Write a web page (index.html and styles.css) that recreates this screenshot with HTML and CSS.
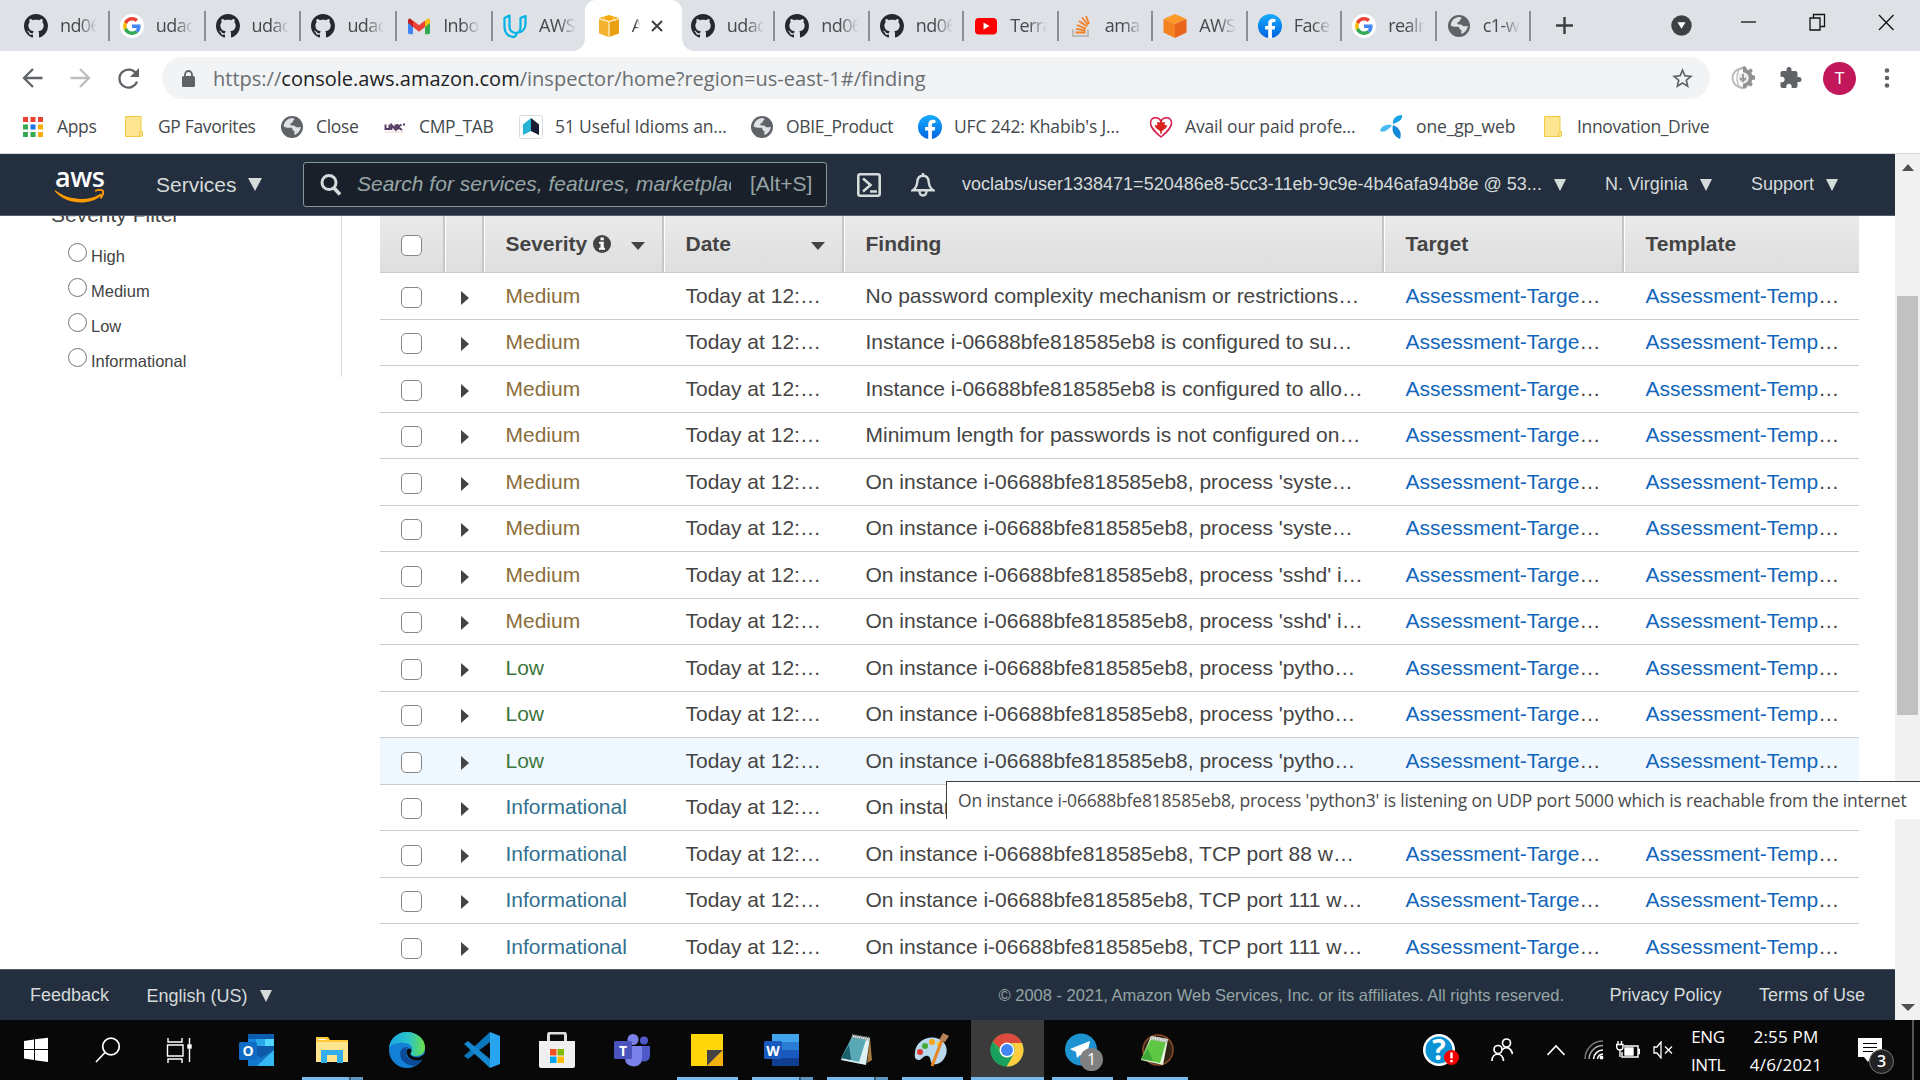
FILE: index.html
```html
<!DOCTYPE html>
<html lang="en">
<head>
<meta charset="utf-8">
<title>Amazon Inspector - Findings</title>
<link rel="stylesheet" href="styles.css">
</head>
<body>
<svg class="defs" width="0" height="0">
  <defs>
    <symbol id="github" viewBox="0 0 16 16"><path fill="#24292e" d="M8 0C3.58 0 0 3.58 0 8c0 3.54 2.29 6.53 5.47 7.59.4.07.55-.17.55-.38 0-.19-.01-.82-.01-1.49-2.01.37-2.53-.49-2.69-.94-.09-.23-.48-.94-.82-1.13-.28-.15-.68-.52-.01-.53.63-.01 1.08.58 1.23.82.72 1.21 1.87.87 2.33.66.07-.52.28-.87.51-1.07-1.78-.2-3.64-.89-3.64-3.95 0-.87.31-1.59.82-2.15-.08-.2-.36-1.02.08-2.12 0 0 .67-.21 2.2.82.64-.18 1.32-.27 2-.27s1.36.09 2 .27c1.53-1.04 2.2-.82 2.2-.82.44 1.1.16 1.92.08 2.12.51.56.82 1.27.82 2.15 0 3.07-1.87 3.75-3.65 3.95.29.25.54.73.54 1.48 0 1.07-.01 1.93-.01 2.2 0 .21.15.46.55.38A8.01 8.01 0 0 0 16 8c0-4.42-3.58-8-8-8z"/></symbol>
    <symbol id="google" viewBox="0 0 24 24"><circle cx="12" cy="12" r="12" fill="#fff"/><g transform="translate(3 3) scale(.375)"><path fill="#EA4335" d="M24 9.5c3.54 0 6.71 1.22 9.21 3.6l6.85-6.85C35.9 2.38 30.47 0 24 0 14.62 0 6.51 5.38 2.56 13.22l7.98 6.19C12.43 13.72 17.74 9.5 24 9.5z"/><path fill="#4285F4" d="M46.98 24.55c0-1.57-.15-3.09-.38-4.55H24v9.02h12.94c-.58 2.96-2.26 5.48-4.78 7.18l7.73 6c4.51-4.18 7.09-10.36 7.09-17.65z"/><path fill="#FBBC05" d="M10.53 28.59c-.48-1.45-.76-2.99-.76-4.59s.27-3.14.76-4.59l-7.98-6.19C.92 16.46 0 20.12 0 24c0 3.88.92 7.54 2.56 10.78l7.97-6.19z"/><path fill="#34A853" d="M24 48c6.48 0 11.93-2.13 15.89-5.81l-7.73-6c-2.15 1.45-4.92 2.3-8.16 2.3-6.26 0-11.57-4.22-13.47-9.91l-7.98 6.19C6.51 42.62 14.62 48 24 48z"/></g></symbol>
    <symbol id="facebook" viewBox="0 0 24 24"><linearGradient id="fbg" x1="0" y1="0" x2="0" y2="1"><stop offset="0" stop-color="#18acfe"/><stop offset="1" stop-color="#0163e0"/></linearGradient><circle cx="12" cy="12" r="12" fill="url(#fbg)"/><path fill="#fff" d="M16.7 15.4l.5-3.4h-3.3V9.8c0-1 .5-1.9 2-1.9h1.5V5s-1.4-.3-2.7-.3c-2.8 0-4.500 1.7-4.500 4.700V12H7.100v3.400h3.100v8.500h3.700v-8.500z"/></symbol>
    <symbol id="globe" viewBox="0 0 22 22"><circle cx="11" cy="11" r="11" fill="#5f6368"/><path fill="#dfe1e5" d="M11.500 2c2 .6 2.500 1.500 1 2.500-1 .8-.5 1.500-1.500 2.200-1 .6-1.500.3-1.700 1.600-.2 1 1.200 1.200 3.400 1.200 1.500 0 1.500 1.500 2.500 1.700 1 .3 3 .1 4.600-.4-.3 3.700-2.600 6.800-6 8.100-.5-1-1-1.700-.3-2.600.5-.7-.2-1.300-1-1.600-1.400-.5-.8-2.700-2.200-2.900-2.200-.3-4.300.3-7.600-1.400.2-4.500 4-8.300 8.800-8.400z"/></symbol>
    <symbol id="folder" viewBox="0 0 20 24"><path fill="#fee592" stroke="#f2ca45" stroke-width="1" d="M1.500 1.500h15.500v15h1.500v3.500q0 1.500-1.500 1.500h-15.500z"/><path fill="none" stroke="#f2ca45" d="M15.500 21.500v-3.500q0-1.500 1.500-1.500"/></symbol>
  </defs>
</svg>

<header class="tabstrip">
  <div class="tab left"><svg class="fav"><use href="#github"/></svg><span>nd06</span></div>
  <div class="tab left"><svg class="fav"><use href="#google"/></svg><span>udac</span></div>
  <div class="tab left"><svg class="fav"><use href="#github"/></svg><span>udac</span></div>
  <div class="tab left"><svg class="fav"><use href="#github"/></svg><span>udac</span></div>
  <div class="tab left"><svg class="fav" viewBox="0 0 24 24"><path fill="#4285f4" d="M1 6v12.500c0 1 .7 1.700 1.700 1.700H6V10z"/><path fill="#34a853" d="M23 6v12.500c0 1-.7 1.700-1.700 1.700H18V10z"/><path fill="#c5221f" d="M1 6.500V9l5 4V7L3.800 5C2.500 4 1 5 1 6.500z"/><path fill="#fbbc04" d="M23 6.500V9l-5 4V7l2.200-2C21.500 4 23 5 23 6.500z"/><path fill="#ea4335" d="M6 13V6.500l6 4.800 6-4.800V13l-6 4.700z"/></svg><span>Inbo</span></div>
  <div class="tab left last"><svg class="fav" viewBox="0 0 24 24" fill="none" stroke="#02b3e4" stroke-width="2.200" stroke-linejoin="round"><path d="M6.500 1.500 1.500 4v9c0 6 4 10 9.500 10 2-1 2.500-2 2.500-4-4 0-7-2-7-6.500z"/><path d="M13.500 19c5.500-.5 9-4 9-9V2l-5 2v9c0 3.500-1.500 5.500-4 6"/></svg><span>AWS</span></div>
  <div class="tab active"><svg class="fav small" viewBox="0 0 22 24"><path fill="#f7a80d" d="M1 4 11 1l10 3-10 3z"/><path fill="#f4b132" d="M1 5 10.500 8v15L1 19.500z"/><path fill="#e99f12" d="M21 5 11.500 8v15l9.500-3.500z"/><path stroke="#ffd98a" d="M11 7v16M6 3v3l-2 1M16 3v3l2 1" fill="none"/></svg><span>A</span><svg class="x" viewBox="0 0 12 12"><path d="M1 1l10 10M11 1 1 11" stroke="#3c4043" stroke-width="2"/></svg></div>
  <div class="tab"><svg class="fav"><use href="#github"/></svg><span>udac</span></div>
  <div class="tab"><svg class="fav"><use href="#github"/></svg><span>nd06</span></div>
  <div class="tab"><svg class="fav"><use href="#github"/></svg><span>nd06</span></div>
  <div class="tab"><svg class="fav" viewBox="0 0 24 24"><rect x="1" y="4" width="22" height="16.500" rx="4" fill="#f00"/><path fill="#fff" d="M9.500 8.500v7l6-3.500z"/></svg><span>Terra</span></div>
  <div class="tab"><svg class="fav" viewBox="0 0 24 24" fill="none"><path d="M4 15.500V22h15v-6.500" stroke="#bcbbbb" stroke-width="2"/><path d="M6.500 18.500h10M6.800 14.800l9.700 1.700M7.800 11l9 3.600M10 7l8 5.600M13 3.500l6 7.500M17 2l3 8" stroke="#f48024" stroke-width="1.800"/></svg><span>ama</span></div>
  <div class="tab"><svg class="fav" viewBox="0 0 24 24"><path fill="#fc9827" d="m12 0 11.500 5L12 10 .5 5z"/><path fill="#f58220" d="M.5 5 12 10v14L.5 18.500z"/><path fill="#e8641b" d="M23.500 5 12 10v14l11.500-5.500z"/></svg><span>AWS</span></div>
  <div class="tab"><svg class="fav"><use href="#facebook"/></svg><span>Face</span></div>
  <div class="tab"><svg class="fav"><use href="#google"/></svg><span>realr</span></div>
  <div class="tab"><svg class="fav"><use href="#globe" x="1" y="1" width="22" height="22"/></svg><span>c1-w</span></div>
  <svg class="plus" viewBox="0 0 18 18"><path d="M9 0v18M0 9h18" stroke="#3c4043" stroke-width="2.600"/></svg>
  <svg class="drop" viewBox="0 0 22 22"><circle cx="11" cy="11" r="10.700" fill="#3c4043"/><path fill="#fff" d="M6.800 7.500h8.400L11 14.500z"/></svg>
  <svg class="winbtns" viewBox="0 0 154 18" fill="none" stroke="#111" stroke-width="1.300"><path d="M0 9h15"/><path d="M69 5h10v12H69zM72.500 5V1.500H83.500V13.500H79.500"/><path d="m138 2 14.500 15M152.500 2 138 17"/></svg>
</header>

<nav class="toolbar">
  <svg class="arrows" viewBox="0 0 118 24" fill="none" stroke-width="2.300"><path stroke="#5f6368" d="M20.500 12H2M11 3l-9 9 9 9"/><path stroke="#bcbec0" d="M48.500 12H67M58 3l9 9-9 9"/><path stroke="#5f6368" d="M114.500 8.500A9 9 0 1 0 115 15.500"/><path fill="#5f6368" d="M117 2v9h-9z"/></svg>
  <div class="omnibox">
    <svg class="lock" viewBox="0 0 13 17"><rect y="6" width="13" height="11" rx="1.500" fill="#5f6368"/><path d="M3 7V4.500a3.500 3.500 0 0 1 7 0V7" fill="none" stroke="#5f6368" stroke-width="1.800"/></svg>
    <span class="url">https://<b>console.aws.amazon.com</b>/inspector/home?region=us-east-1#/finding</span>
    <svg class="star" viewBox="0 0 24 24"><path fill="#5f6368" d="m22 9.240-7.190-.62L12 2 9.190 8.630 2 9.240l5.460 4.730L5.820 21 12 17.270 18.180 21l-1.630-7.030L22 9.240zM12 15.400l-3.760 2.270 1-4.280-3.320-2.880 4.380-.38L12 6.100l1.710 4.040 4.380.38-3.320 2.880 1 4.280L12 15.400z"/></svg>
  </div>
  <svg class="ext" viewBox="0 0 24 24"><circle cx="11" cy="12" r="9.500" fill="none" stroke="#bbb" stroke-width="2"/><path d="M12 1C4 3 4 21 12 23" fill="none" stroke="#bbb" stroke-width="1.500"/><path fill="#909090" d="M12 .5h3l.5 3 2 .8 2.300-2 2 2.400-1.600 2.300.8 2 3 .5v4l-3 .5-.8 2 1.600 2.300-2 2.400-2.300-2-2 .8-.5 3h-3z"/><circle cx="12" cy="12" r="5.800" fill="#eee"/><path d="M12 8v7M9 12l3 3 3-3" fill="none" stroke="#999" stroke-width="2"/></svg>
  <svg class="puzzle" viewBox="2 1 21 22"><path fill="#5f6368" d="M20.500 11H19V7c0-1.100-.9-2-2-2h-4V3.500a2.500 2.500 0 0 0-5 0V5H4c-1.100 0-1.990.9-1.990 2v3.800H3.500c1.490 0 2.700 1.210 2.700 2.700s-1.210 2.700-2.700 2.700H2V20c0 1.100.9 2 2 2h3.800v-1.500c0-1.490 1.210-2.700 2.700-2.700s2.700 1.210 2.700 2.700V22H17c1.100 0 2-.9 2-2v-4h1.500a2.500 2.500 0 0 0 0-5z"/></svg>
  <div class="avatar">T</div>
  <svg class="dots" viewBox="0 0 6 20" fill="#5f6368"><circle cx="3" cy="2.500" r="2.300"/><circle cx="3" cy="10" r="2.300"/><circle cx="3" cy="17.500" r="2.300"/></svg>
</nav>

<nav class="bookmarks">
  <a><svg viewBox="0 0 24 24"><g fill="#ea4335"><path d="M2 2h5v5H2zM9.500 2h5v5h-5zM17 2h5v5h-5z"/></g><path fill="#34a853" d="M2 9.500h5v5H2zM2 17h5v5H2zM9.500 17h5v5h-5z"/><path fill="#1a73e8" d="M9.500 9.500h5v5h-5z"/><path fill="#fbab05" d="M17 9.500h5v5h-5zM17 17h5v5h-5z"/></svg><span>Apps</span></a>
  <a><svg><use href="#folder"/></svg><span>GP Favorites</span></a>
  <a><svg><use href="#globe" x="1" y="1" width="22" height="22"/></svg><span>Close</span></a>
  <a><svg viewBox="0 0 24 24"><path d="M2.500 9.500v4.500h4V9.500M8.500 15v-5l4 4.500V9.500M14.500 9v6M18.500 9.500l-3.500 2.500 4 3M20 9.500h2" fill="none" stroke="#553a63" stroke-width="1.900"/><path d="M2 17h18" stroke="#e6d2cc"/></svg><span>CMP_TAB</span></a>
  <a class="wide"><svg viewBox="0 0 24 24"><rect x=".5" y=".5" width="23" height="23" rx="2" fill="#fff" stroke="#dadce0"/><path fill="#27b3d3" d="M4 9.500 12 3v13l-8 4z"/><path fill="#171b33" d="M12 3l8 6.500V20l-8-4z"/></svg><span>51 Useful Idioms an...</span></a>
  <a><svg><use href="#globe" x="1" y="1" width="22" height="22"/></svg><span>OBIE_Product</span></a>
  <a class="wide"><svg><use href="#facebook"/></svg><span>UFC 242: Khabib's J...</span></a>
  <a class="wide"><svg viewBox="0 0 24 24"><path d="M12 22C5 16 1 12 1.500 7.500 2 2 9 1 12 6c3-5 10-4 10.500 1.500C23 12 19 16 12 22z" fill="none" stroke="#d81c4c" stroke-width="1.500"/><path fill="#d8231f" d="m12 5 1.500 2.500L16 7l-.5 3 3 .5-1.500 2.500-4 3-.5 3h-1l-.5-3-4-3L5.500 10.500l3-.5L8 7l2.500.5z"/></svg><span>Avail our paid profe...</span></a>
  <a class="wide"><svg viewBox="0 0 24 24" fill="#19a3e6"><path d="M13 9c-1-5 3-9 9-9 1 5-4 7-9 9z"/><path d="M12 10C6 9 1 11 0 16c5 2 9-2 12-6z" fill="#45b9f0"/><path d="M13 10c7 3 9 8 7 14-5-2-9-7-7-14z" fill="#1389d8"/></svg><span>one_gp_web</span></a>
  <a><svg><use href="#folder"/></svg><span>Innovation_Drive</span></a>
</nav>

<main class="viewport">
  <div class="page">
    <header class="awsnav">
      <div class="logo"><span>aws</span><svg viewBox="0 0 49 14"><path fill="#f90" d="M0 1C12 11 33 13 45 5c1.500-1 2.500.500 1.200 1.700C34 17 11 15.500 0 2.500z"/><path d="M40 2c3-1.500 7-1.500 8 0 .5 2-.5 5-2.500 7.500" fill="none" stroke="#f90" stroke-width="1.900"/></svg></div>
      <div class="services">Services <i class="tri big"></i></div>
      <div class="search">
        <svg viewBox="0 0 22 22" fill="none" stroke="#d5dbdb"><circle cx="9" cy="8.500" r="7" stroke-width="3"/><path d="m14 14 6 6.500" stroke-width="3.600"/></svg>
        <em>Search for services, features, marketplac</em><span>[Alt+S]</span>
      </div>
      <svg class="navicon shell" viewBox="0 0 24 24" fill="none" stroke="#d5dbdb" stroke-width="2.600"><rect x="1.300" y="1.300" width="21.400" height="21.400" rx="2"/><path d="m6 5.500 7.500 6.500L6 18.500M13 18.500h7"/></svg>
      <svg class="navicon bell" viewBox="0 0 24 24" fill="none" stroke="#d5dbdb" stroke-width="2.400"><path d="M12 0v2.500M12 2.800C8 2.800 6.500 6 6.300 9 6 12.500 5 15 1.800 17.300h20.400C19 15 18 12.500 17.700 9 17.500 6 16 2.800 12 2.800zM8.500 18c0 6 7 6 7 0"/></svg>
      <div class="acct">voclabs/user1338471=520486e8-5cc3-11eb-9c9e-4b46afa94b8e @ 53...<i class="tri"></i></div>
      <div class="region">N. Virginia<i class="tri"></i></div>
      <div class="support">Support<i class="tri"></i></div>
    </header>
    <div class="content">
      <aside class="filter">
        <h3>Severity Filter</h3>
        <label><i></i>High</label><label><i></i>Medium</label><label><i></i>Low</label><label><i></i>Informational</label>
      </aside>
      <section class="table">
        <div class="row head"><div><i class="cb"></i></div><div></div><div>Severity<svg class="info" viewBox="0 0 18 18"><circle cx="9" cy="9" r="9" fill="#444"/><path fill="#fff" d="M7.500 2.500h3.300v2.700H7.500zM6 6.700h4.800v6H12v2H6v-2h1.500v-4H6z"/></svg><i class="sort"></i></div><div>Date<i class="sort"></i></div><div>Finding</div><div>Target</div><div>Template</div></div>
        <div class="row"><div><i class="cb"></i></div><div><i class="exp"></i></div><div class="med">Medium</div><div>Today at 12:…</div><div>No password complexity mechanism or restrictions…</div><div><a>Assessment-Targe</a>…</div><div><a>Assessment-Temp</a>…</div></div>
        <div class="row"><div><i class="cb"></i></div><div><i class="exp"></i></div><div class="med">Medium</div><div>Today at 12:…</div><div>Instance i-06688bfe818585eb8 is configured to su…</div><div><a>Assessment-Targe</a>…</div><div><a>Assessment-Temp</a>…</div></div>
        <div class="row"><div><i class="cb"></i></div><div><i class="exp"></i></div><div class="med">Medium</div><div>Today at 12:…</div><div>Instance i-06688bfe818585eb8 is configured to allo…</div><div><a>Assessment-Targe</a>…</div><div><a>Assessment-Temp</a>…</div></div>
        <div class="row"><div><i class="cb"></i></div><div><i class="exp"></i></div><div class="med">Medium</div><div>Today at 12:…</div><div>Minimum length for passwords is not configured on…</div><div><a>Assessment-Targe</a>…</div><div><a>Assessment-Temp</a>…</div></div>
        <div class="row"><div><i class="cb"></i></div><div><i class="exp"></i></div><div class="med">Medium</div><div>Today at 12:…</div><div>On instance i-06688bfe818585eb8, process 'syste…</div><div><a>Assessment-Targe</a>…</div><div><a>Assessment-Temp</a>…</div></div>
        <div class="row"><div><i class="cb"></i></div><div><i class="exp"></i></div><div class="med">Medium</div><div>Today at 12:…</div><div>On instance i-06688bfe818585eb8, process 'syste…</div><div><a>Assessment-Targe</a>…</div><div><a>Assessment-Temp</a>…</div></div>
        <div class="row"><div><i class="cb"></i></div><div><i class="exp"></i></div><div class="med">Medium</div><div>Today at 12:…</div><div>On instance i-06688bfe818585eb8, process 'sshd' i…</div><div><a>Assessment-Targe</a>…</div><div><a>Assessment-Temp</a>…</div></div>
        <div class="row"><div><i class="cb"></i></div><div><i class="exp"></i></div><div class="med">Medium</div><div>Today at 12:…</div><div>On instance i-06688bfe818585eb8, process 'sshd' i…</div><div><a>Assessment-Targe</a>…</div><div><a>Assessment-Temp</a>…</div></div>
        <div class="row"><div><i class="cb"></i></div><div><i class="exp"></i></div><div class="low">Low</div><div>Today at 12:…</div><div>On instance i-06688bfe818585eb8, process 'pytho…</div><div><a>Assessment-Targe</a>…</div><div><a>Assessment-Temp</a>…</div></div>
        <div class="row"><div><i class="cb"></i></div><div><i class="exp"></i></div><div class="low">Low</div><div>Today at 12:…</div><div>On instance i-06688bfe818585eb8, process 'pytho…</div><div><a>Assessment-Targe</a>…</div><div><a>Assessment-Temp</a>…</div></div>
        <div class="row hover"><div><i class="cb"></i></div><div><i class="exp"></i></div><div class="low">Low</div><div>Today at 12:…</div><div>On instance i-06688bfe818585eb8, process 'pytho…</div><div><a>Assessment-Targe</a>…</div><div><a>Assessment-Temp</a>…</div></div>
        <div class="row"><div><i class="cb"></i></div><div><i class="exp"></i></div><div class="inf">Informational</div><div>Today at 12:…</div><div>On instan</div><div></div><div></div></div>
        <div class="row"><div><i class="cb"></i></div><div><i class="exp"></i></div><div class="inf">Informational</div><div>Today at 12:…</div><div>On instance i-06688bfe818585eb8, TCP port 88 w…</div><div><a>Assessment-Targe</a>…</div><div><a>Assessment-Temp</a>…</div></div>
        <div class="row"><div><i class="cb"></i></div><div><i class="exp"></i></div><div class="inf">Informational</div><div>Today at 12:…</div><div>On instance i-06688bfe818585eb8, TCP port 111 w…</div><div><a>Assessment-Targe</a>…</div><div><a>Assessment-Temp</a>…</div></div>
        <div class="row"><div><i class="cb"></i></div><div><i class="exp"></i></div><div class="inf">Informational</div><div>Today at 12:…</div><div>On instance i-06688bfe818585eb8, TCP port 111 w…</div><div><a>Assessment-Targe</a>…</div><div><a>Assessment-Temp</a>…</div></div>
      </section>
    </div>
    <footer class="awsfoot">
      <span class="feedback">Feedback</span><span class="lang">English (US)<i class="tri"></i></span>
      <span class="copy">© 2008 - 2021, Amazon Web Services, Inc. or its affiliates. All rights reserved.</span>
      <span class="privacy">Privacy Policy</span><span>Terms of Use</span>
    </footer>
  </div>
  <div class="scrollbar"><i class="up"></i><i class="thumb"></i><i class="down"></i></div>
</main>

<div class="tooltip">On instance i-06688bfe818585eb8, process 'python3' is listening on UDP port 5000 which is reachable from the internet</div>

<footer class="taskbar">
  <div class="apps">
    <div class="app sys"><svg viewBox="0 0 36 36" fill="#fff"><path d="M6 9l10-1.500V17H6zM17 7.300 30 5.800V17H17zM6 18h10v10L6 26.500zM17 18h13v12l-13-1.800z"/></svg></div>
    <div class="app sys"><svg viewBox="0 0 36 36" fill="none" stroke="#fff" stroke-width="1.700"><circle cx="21" cy="14.500" r="8.300"/><path d="M15 20.500 6 30"/></svg></div>
    <div class="app sys"><svg viewBox="0 0 36 36" fill="none" stroke="#fff" stroke-width="1.400"><path d="M7 6v4h14V6M6.500 13h15.500v11H6.500zM7 31v-4h14v4M28.500 6v6M28.500 17v13"/><path d="M27 13h3v3h-3z" fill="#fff"/></svg></div>
    <div class="app"><svg viewBox="0 0 36 36"><path fill="#0a5cb0" d="M9 2h26v16H9z"/><path fill="#1a84d8" d="M9 7h8v11H9z"/><path fill="#28a8ea" d="M17 7h9v11h-9z"/><path fill="#50d9ff" d="M26 7h9v8h-9z"/><path fill="#1377cb" d="M9 16h26v18H9z"/><path fill="#35b8f1" d="M35 18v16H18z"/><path fill="#0f5aa8" d="m9 18 13 8 13-8v-4H9z"/><rect y="10" width="18" height="18" rx="1.500" fill="#0f6cc4"/><text x="9" y="24" text-anchor="middle">O</text></svg></div>
    <div class="app run multi"><svg viewBox="0 0 36 36"><path fill="#ffc93c" d="M2 5h12l2 3h18v4H2z"/><path fill="#ffe490" d="M2 10h32v20H2z"/><path fill="#fff" d="M4 7h8v1H4z"/><path fill="#34aeea" d="M7 18h22v13h-6v-8H13v8H7z"/></svg></div>
    <div class="app"><svg viewBox="0 0 36 36"><defs><linearGradient id="eg" x1="0" x2="1"><stop offset="0" stop-color="#1ba5e0"/><stop offset=".55" stop-color="#2bc3c9"/><stop offset="1" stop-color="#6be044"/></linearGradient></defs><circle cx="18" cy="18" r="18" fill="#1380d6"/><path fill="url(#eg)" d="M0 16C1 6 9 0 18 0c10 0 18 7 18 15 0 6-4 9-9 9-4 0-6-2-5-4 3-5-1-9-7-9C8 10 2 13 0 16z"/><path fill="#0c4a98" d="M12 18c-3 8 3 15 13 16 4-1 7-4 8-7-8 3-16 1-16-7 0-2 .5-4 2-5-3 0-6 1-7 3z"/><path fill="#080808" d="M17.500 19c0-2 3-4 5-1 .5 2-3 4 .5 6 5 2.500 10 1 13-3v4.500l-2.500 2C25 30 17.500 27 17.500 19z"/></svg></div>
    <div class="app"><svg viewBox="0 0 36 36"><path fill="#0b78bd" d="M26 0v10L4 27 0 24z"/><path fill="#1588d0" d="M0 12l4-3 22 18v9z"/><path fill="#28a5ee" d="m26 0 10 4v28l-10 4z"/></svg></div>
    <div class="app"><svg viewBox="0 0 36 36"><path d="M9.500 12V3q0-2 2-2h13q2 0 2 2v9" fill="none" stroke="#ddd" stroke-width="3"/><path fill="#f0f0f0" d="M0 9h36v25q0 2-2 2H2q-2 0-2-2z"/><path fill="#f25022" d="M11 17h6.500v6.500H11z"/><path fill="#7fba00" d="M18.500 17H25v6.500h-6.500z"/><path fill="#00a4ef" d="M11 24.500h6.500V31H11z"/><path fill="#ffb900" d="M18.500 24.500H25V31h-6.500z"/></svg></div>
    <div class="app"><svg viewBox="0 0 36 36"><circle cx="19" cy="7.500" r="5.500" fill="#7b83eb"/><circle cx="30" cy="8.500" r="4" fill="#5059c9"/><path fill="#5059c9" d="M25 14h11v9q0 6-6 6.500-5 0-5-6z"/><path fill="#7b83eb" d="M11 14h17v12q0 8-8 8.500-9-.5-9-8.500z"/><rect y="9" width="18" height="18" rx="1.500" fill="#4b53bc"/><text x="9" y="23.500" text-anchor="middle">T</text></svg></div>
    <div class="app run"><svg viewBox="0 0 36 36"><path fill="#ffd60a" d="M2 2h32v16L20 34H2z"/><path fill="#444" d="M18 18h16L18 34z"/><path fill="#f2b10c" d="M34 18v16H18z"/></svg></div>
    <div class="app run multi"><svg viewBox="0 0 36 36"><path fill="#41a5ee" d="M8 2h27v8H8z"/><path fill="#2b7cd3" d="M8 10h27v8H8z"/><path fill="#185abd" d="M8 18h27v8H8z"/><path fill="#103f91" d="M8 26h27v8H8z"/><rect y="9" width="18" height="18" rx="1.500" fill="#185abd"/><text x="9" y="23.500" text-anchor="middle">W</text></svg></div>
    <div class="app run multi"><svg viewBox="0 0 36 36"><path fill="#a57b3e" d="m31 6 2 22-5 3z"/><path fill="#dff1f3" d="m14 3 17 3-4 27L2 28z"/><path fill="#58a9b5" d="m13 5 14 2.500-7 22.500L2 26z"/><path fill="#1c5f6d" d="M10 13 2 26l10 2z"/><path d="M13 4l18 3" stroke="#999" stroke-width="4" stroke-dasharray="1 1"/></svg></div>
    <div class="app run"><svg viewBox="0 0 36 36"><path fill="#b8d9ee" d="M1 20C2 10 12 4 22 6c10 2 13 12 9 19-3 6-8 8-12 7-4-2-1-6-5-8-5-2-7 7-12 3-2-2-1-5-1-7z"/><circle cx="6" cy="20" r="3" fill="#e23c31"/><circle cx="11" cy="14" r="3" fill="#46ac37"/><circle cx="18" cy="10" r="3" fill="#f7a51b"/><circle cx="25" cy="12" r="2.500" fill="#fbc837"/><path stroke="#e98523" stroke-width="3" d="M28 8 18 34"/><path fill="#b68458" d="m25 8 4-7 6 3-4 6z"/></svg></div>
    <div class="app run current"><svg viewBox="0 0 36 36"><circle cx="18" cy="18" r="16.500" fill="#34a853"/><path fill="#dd4b3e" d="M3.700 9.700A16.500 16.500 0 0 1 33 11H18a7.500 7.500 0 0 0-7 5z"/><path fill="#ffcd40" d="M33 11a16.500 16.500 0 0 1-15.500 23.500L24.500 22A8 8 0 0 0 22 11z"/><path fill="#18a05d" d="M3.700 9.700A16.500 16.500 0 0 0 17.500 34.500L24 23q-3 3-7 3-5-1-6.500-5z"/><circle cx="18" cy="18" r="7.500" fill="#fff"/><circle cx="18" cy="18" r="6" fill="#4285f4"/></svg></div>
    <div class="app run"><svg viewBox="0 0 36 36"><circle cx="17" cy="17.500" r="16" fill="#1d93d2"/><path fill="#fff" d="M6 17 26 9l-4 18-6-4-3 3-1-6z"/></svg><b class="badge">1</b></div>
    <div class="app run"><svg viewBox="0 0 36 36"><circle cx="19" cy="18" r="15" fill="#302214" stroke="#8c4c2c" stroke-width="1.500"/><path fill="#e8f5df" d="m12 4 17 3-5 26L2 28z"/><path fill="#5fc744" d="m12 7 15 3-6 21L2 27z"/><path fill="#3fa637" d="M9 17 2 27l12 2z"/><path d="M12 6l17 3" stroke="#bbb" stroke-width="4" stroke-dasharray="1.500 1"/></svg></div>
  </div>
  <div class="tray">
    <svg class="help" viewBox="0 0 37 34"><circle cx="16" cy="16" r="16" fill="#fff"/><circle cx="16" cy="16" r="13.500" fill="#0a94d6"/><text x="16" y="26" text-anchor="middle" class="q">?</text><circle cx="28.500" cy="23.500" r="7.500" fill="#f40000"/><path d="M28.500 18.500v6M28.500 26v2.200" stroke="#fff" stroke-width="2.400"/></svg>
    <svg class="people" viewBox="0 0 22 24" fill="none" stroke="#fff" stroke-width="1.700"><circle cx="7" cy="11.500" r="4"/><circle cx="15.500" cy="5" r="4"/><path d="M1 23c0-9 11-9 11.500 0M11 12c3-4 9-3 10.500 4"/></svg>
    <svg class="chev" viewBox="0 0 18 12" fill="none" stroke="#fff" stroke-width="1.600"><path d="m.5 11 8.500-9 8.500 9"/></svg>
    <svg class="wifi" viewBox="0 0 20 20" fill="none" stroke="#fff" stroke-width="1.500"><path stroke="#777" d="M1 19A18 18 0 0 1 19 1"/><path stroke="#aaa" d="M5 19A14 14 0 0 1 19 5.500"/><path d="M9.500 19A9.500 9.500 0 0 1 19 10M13.500 19a6 6 0 0 1 5.500-5"/><circle cx="17.500" cy="17.500" r="1.200" fill="#fff"/></svg>
    <svg class="bat" viewBox="0 0 24 18" fill="none" stroke="#fff" stroke-width="1.400"><path d="M8 5h14v11H6v-5M22 8.500h1.500v4H22M2 0v4M5.500 0v4M.7 3.500H7V6c0 4-6 4-6.300 0zM4 9v7"/><path fill="#fff" d="M9 7h8v7H9z"/></svg>
    <svg class="vol" viewBox="0 0 20 18" fill="none" stroke="#fff" stroke-width="1.300"><path d="M1 6h3l4-5v16l-4-5H1zM12 5.500l7 7M19 5.500l-7 7"/></svg>
    <div class="two lang2">ENG<br>INTL</div>
    <div class="two clock">2:55 PM<br>4/6/2021</div>
    <div class="notif"><svg viewBox="0 0 24 24"><path fill="#fff" d="M0 0h24v19H13l-3 5-4-5H0z"/><path d="M5 5.500h14M5 9.500h14M5 13.500h10" stroke="#000" stroke-width="1.200"/></svg><b class="count">3</b></div>
    <i class="peek"></i>
  </div>
</footer>
</body>
</html>
```
FILE: styles.css
```css
* { box-sizing: border-box; }
body { margin: 0; width: 1920px; height: 1080px; overflow: hidden; position: relative; background: #fff; font-family: "Liberation Sans", Arial, sans-serif; color: #444; }
svg { display: block; flex: none; }
i { font-style: normal; flex: none; }
.defs { position: absolute; }

/* browser tabs */
.tabstrip { height: 51px; background: #dee1e6; display: flex; align-items: center; padding-left: 14px; font: 18px "Open Sans", "Noto Sans", sans-serif; color: #45494d; }
.tab { width: 94.5px; height: 30px; border-right: 2px solid #8b8e93; display: flex; align-items: center; padding-left: 10px; flex: none; }
.tab.left { width: 95.8px; }
.tab.last { border-color: transparent; }
.tab span { width: 38px; margin-left: 12px; padding-bottom: 2px; overflow: hidden; white-space: nowrap; letter-spacing: -.6px; -webkit-mask-image: linear-gradient(90deg, #000 50%, transparent 98%); mask-image: linear-gradient(90deg, #000 50%, transparent 98%); }
.fav { width: 24px; height: 24px; }
.tab.active { width: 97px; height: 51px; margin: 0 -1px 0 -4px; background: #fff; border: 0; border-radius: 11px 11px 0 0; padding-left: 13px; position: relative; }
.tab.active::before, .tab.active::after { content: ""; position: absolute; bottom: 0; width: 12px; height: 12px; }
.tab.active::before { left: -12px; background: radial-gradient(circle at 0 0, transparent 11.500px, #fff 12px); }
.tab.active::after { right: -12px; background: radial-gradient(circle at 100% 0, transparent 11.500px, #fff 12px); }
.tab.active span { width: 8px; margin-left: 12px; }
.fav.small { width: 22px; }
.x { width: 12px; height: 12px; margin-left: 11px; }
.plus { width: 17px; height: 17px; margin-left: 25px; }
.drop { width: 21px; height: 21px; margin-left: 98px; }
.winbtns { width: 154px; height: 18px; margin: -8px 0 0 49px; }

/* address bar */
.toolbar { height: 54px; display: flex; align-items: center; padding-left: 22px; }
.arrows { width: 118px; height: 24px; }
.omnibox { margin-left: 22px; width: 1548px; height: 42px; border-radius: 21px; background: #f1f3f4; display: flex; align-items: center; padding: 0 15px 0 20px; }
.lock { width: 13px; height: 17px; }
.url { flex: 1; margin-left: 18px; font: 20px "Open Sans", "Noto Sans", sans-serif; color: #6a6e72; white-space: nowrap; letter-spacing: .01px; }
.url b { font-weight: 400; color: #202124; }
.star { width: 25px; height: 25px; }
.ext { width: 24px; height: 24px; margin-left: 21px; }
.puzzle { width: 22px; height: 22px; margin-left: 25px; }
.avatar { width: 33px; height: 33px; margin-left: 21px; border-radius: 50%; background: #c2185b; color: #fff; font: 17px/33px Roboto, sans-serif; text-align: center; }
.dots { width: 6px; height: 20px; margin-left: 28px; }
.bookmarks { height: 49px; padding: 0 0 5px 21px; border-bottom: 1px solid #d4d6d9; display: grid; grid-template-columns: 101px 158px 103px 136px 231px 168px 231px 231px 161px 1fr; align-items: center; font: 17.500px "Open Sans", "Noto Sans", sans-serif; color: #45494d; }
.bookmarks a { display: flex; align-items: center; gap: 12px; white-space: nowrap; letter-spacing: -.35px; }
.bookmarks a.wide { letter-spacing: -.15px; }
.bookmarks svg { width: 24px; height: 24px; }
.bookmarks span { padding-bottom: 2px; }

/* page area */
.viewport { height: 866px; display: flex; }
.page { width: 1895px; height: 866px; display: flex; flex-direction: column; }
.awsnav { height: 62px; flex: none; background: #232f3e; border-bottom: 1px solid #545b64; display: flex; align-items: center; color: #d5dbdb; font-size: 18px; white-space: nowrap; padding-left: 55px; }
.logo { width: 49px; color: #fff; font: 600 27px/24px "Open Sans", sans-serif; letter-spacing: -.5px; }
.logo span { display: block; height: 22px; line-height: 19px; text-align: center; }
.logo svg { width: 49px; height: 14px; }
.services { margin-left: 52px; width: 147px; font-size: 21px; display: flex; align-items: center; }
.tri { width: 0; height: 0; border: 6.500px solid transparent; border-top: 12px solid #d5dbdb; border-bottom: 0; margin-left: 12px; }
.tri.big { border-width: 13px 7.500px 0; margin-left: 11px; }
.search { width: 524px; height: 45px; background: #1a2029; border: 1px solid #879596; border-radius: 3px; display: flex; align-items: center; padding-left: 16px; font-size: 21px; color: #95a5a6; }
.search svg { width: 22px; height: 22px; }
.search em { width: 374px; margin-left: 15px; padding-bottom: 2px; overflow: hidden; }
.search span { margin-left: 19px; padding-bottom: 2px; }
.navicon { width: 24px; height: 24px; margin-left: 30px; }
.acct, .region, .support { display: flex; align-items: center; }
.acct { margin-left: 27px; width: 643px; }
.region { width: 146px; }

.content { flex: 1; min-height: 0; overflow: hidden; display: flex; }
.filter { width: 342px; height: 161px; border-right: 1px solid #ddd; flex: none; overflow: hidden; }
.filter h3 { margin: -12px 0 14px 51px; font: 21px/22px "Liberation Sans", sans-serif; }
.filter label { display: flex; height: 35px; padding-left: 68px; font-size: 16.500px; line-height: 33px; }
.filter label i { width: 19px; height: 19px; border: 1px solid #767676; border-radius: 50%; background: #fff; margin: 3px 4px 0 0; }
.table { margin-left: 38px; width: 1479px; font-size: 21px; white-space: nowrap; }
.row { height: 46.500px; display: grid; grid-template-columns: 65px 39px 180px 180px 540px 240px 235px; border-bottom: 1px solid #ccc; }
.row > div { padding-left: 21.500px; display: flex; align-items: center; }
.row > div:nth-child(2) { padding-left: 16px; }
.row > div:first-child { padding: 3px 0 0 21px; }
.row a { color: #1166bb; }
.hover { background: #f0f8ff; }
.head { height: 57px; font-weight: 700; background: linear-gradient(#eaeaea, #dedede); }
.head > div { border-right: 2px solid #c6c6c6; box-shadow: 1px 0 #fff; }
.head > div:last-child { border: 0; box-shadow: none; }
.row.head > div:first-child { padding-top: 2px; }
.cb { width: 21px; height: 21px; border: 1px solid #858585; border-radius: 5px; background: #fff; }
.exp { border: 7px solid transparent; border-left: 8px solid #444; border-right: 0; margin-top: 4px; }
.info { width: 18px; height: 18px; margin-left: 6px; }
.sort { border: 7px solid transparent; border-top: 8px solid #444; border-bottom: 0; margin: 4px 17px 0 auto; }
.med { color: #8a6d3b; }
.low { color: #3c763d; }
.inf { color: #31708f; }
.awsfoot { height: 51px; flex: none; background: #232f3e; border-top: 1px solid #545b64; display: flex; align-items: center; color: #d5dbdb; font-size: 18px; padding-left: 30px; white-space: nowrap; }
.feedback { width: 116.500px; }
.lang { width: 852px; display: flex; align-items: center; padding-top: 2px; }
.copy { width: 611px; font-size: 16.500px; color: #95a5a6; }
.privacy { width: 149.500px; }
.scrollbar { width: 25px; background: #f1f1f1; display: flex; flex-direction: column; align-items: center; padding: 10px 0 9px; }
.up { border: 6.500px solid transparent; border-bottom: 7px solid #505050; border-top: 0; }
.thumb { width: 21px; height: 419px; background: #c1c1c1; margin-top: 125px; }
.down { border: 7px solid transparent; border-top: 7px solid #505050; border-bottom: 0; margin-top: auto; }

.tooltip { position: absolute; left: 946px; top: 781px; width: 974px; height: 38px; border: solid #3c3f42; border-width: 1px 0 0 1px; background: #fff; padding-left: 11px; font: 17.500px/37px "Open Sans", "Noto Sans", sans-serif; color: #4a4a4a; white-space: nowrap; letter-spacing: -.2px; }

/* taskbar */
.taskbar { height: 60px; background: #080808; display: flex; }
.apps { display: flex; }
.app { width: 75px; height: 60px; padding-right: 2px; position: relative; display: flex; align-items: center; justify-content: center; }
.app svg { width: 36px; height: 36px; }
.app text { font: 700 14px "Open Sans", sans-serif; fill: #fff; }
.app.sys { width: 72px; padding: 0; }
.app.sys:nth-child(3) { width: 76px; padding-right: 7px; }
.run::after { content: ""; position: absolute; left: 7px; right: 7px; bottom: 0; height: 3px; background: #76b9ed; }
.run.multi::after { background: linear-gradient(90deg, #76b9ed 47px, #375a75 47px, #375a75 49px, #5f94be 49px); }
.current { background: #3b3b3b; width: 73px; margin: 0 1px; }
.current::after { left: 0; right: 0; }
.badge { position: absolute; right: 17px; bottom: 9px; width: 23px; height: 23px; border-radius: 50%; background: #808080; color: #fff; font: 16px/23px "Open Sans", sans-serif; text-align: center; }
.tray { margin-left: auto; display: flex; align-items: center; color: #fff; font: 17px/28px "Open Sans", "Noto Sans", sans-serif; white-space: nowrap; }
.help { width: 37px; height: 34px; margin-top: 1px; }
.q { font: 700 28px "Open Sans", sans-serif; fill: #fff; }
.people { width: 22px; height: 24px; margin-left: 31px; }
.chev { width: 18px; height: 12px; margin-left: 34px; }
.wifi { width: 20px; height: 20px; margin-left: 19px; }
.bat { width: 24px; height: 18px; margin-left: 12px; }
.vol { width: 20px; height: 18px; margin-left: 13px; }
.two { text-align: center; letter-spacing: -.4px; padding-top: 2px; }
.lang2 { width: 40px; margin-left: 15px; }
.clock { width: 80px; margin-left: 18px; letter-spacing: .2px; }
.notif { width: 36px; height: 36px; margin: 12px 0 0 32px; position: relative; align-self: flex-start; padding-top: 6px; }
.notif svg { width: 24px; height: 24px; }
.count { position: absolute; left: 11px; top: 17px; width: 25px; height: 25px; border: 1px solid #777; border-radius: 50%; background: #222; font: 600 16px/23px "Open Sans", sans-serif; text-align: center; }
.peek { width: 2px; height: 60px; background: #555; margin: 0 6px 0 18px; }
```
